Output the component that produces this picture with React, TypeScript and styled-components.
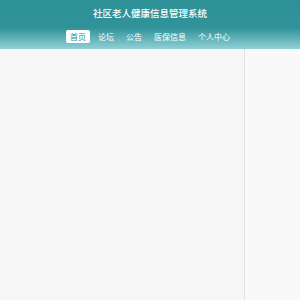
import React from "react";
import styled, { createGlobalStyle } from "styled-components";

const Global = createGlobalStyle`
  html, body { margin: 0; padding: 0; height: 100%; }
  body { font-family: "Noto Sans CJK SC", "Noto Sans", sans-serif; background: #f6f6f6; }
  #root { height: 100%; }
`;

const Page = styled.div`
  display: flex;
  flex-direction: column;
  height: 300px;
`;

const Header = styled.header`
  height: 49px;
  flex: none;
  display: flex;
  flex-direction: column;
  align-items: center;
  background: linear-gradient(to bottom, #2f9198 0px, #31939a 28px, #8fd1d6 49px);
`;

const Title = styled.h1`
  margin: 5px 0 0;
  font-size: 9.5px;
  line-height: 16px;
  font-weight: 500;
  color: #ffffff;
  letter-spacing: 0;
`;

const Nav = styled.nav`
  display: flex;
  gap: 4px;
  margin-top: 9px;
`;

const NavItem = styled.span<{ $active?: boolean }>`
  padding: 1px 4px;
  font-size: 8px;
  line-height: 11px;
  border-radius: 2px;
  color: ${(p) => (p.$active ? "#2f9198" : "#ffffff")};
  background: ${(p) => (p.$active ? "#ffffff" : "transparent")};
`;

const Body = styled.div`
  flex: 1;
  display: flex;
`;

const Main = styled.main`
  width: 244px;
  background: #f6f6f6;
  border-right: 1px solid #e2e2e2;
`;

const Side = styled.aside`
  flex: 1;
  background: #f9f9f9;
`;

const items = ["首页", "论坛", "公告", "医保信息", "个人中心"];

export default function App() {
  return (
    <Page>
      <Global />
      <Header>
        <Title>社区老人健康信息管理系统</Title>
        <Nav>
          {items.map((t, i) => (
            <NavItem key={t} $active={i === 0}>
              {t}
            </NavItem>
          ))}
        </Nav>
      </Header>
      <Body>
        <Main />
        <Side />
      </Body>
    </Page>
  );
}
